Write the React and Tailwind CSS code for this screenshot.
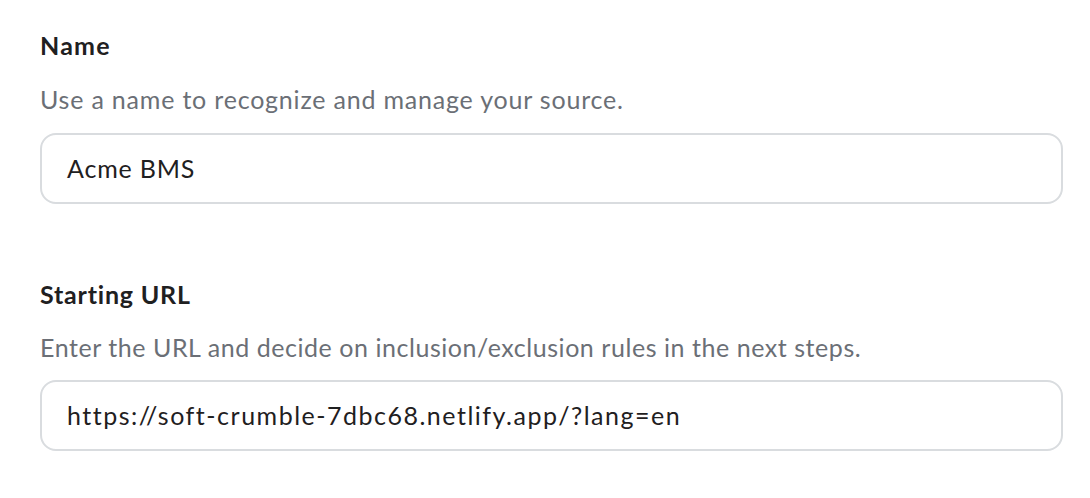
export default function App() {
  return (
    <div className="w-[1090px] h-[498px] bg-white pl-[40px] pr-[27px] pt-[27px] tracking-[0.8px]" style={{ fontFamily: "Lato, 'Noto Sans', sans-serif" }}>
      <div className="flex flex-col">
        <div className="text-[25px] font-bold text-[#1f2021] leading-[36px] tracking-[1.2px]">Name</div>
        <div className="text-[25px] text-[#6b6f76] leading-[36px] mt-[18px]">Use a name to recognize and manage your source.</div>
        <div className="mt-[16px] h-[71px] border-2 border-[#d9dcdf] rounded-[16px] flex items-center px-[25px] text-[25px] text-[#1f2021]">Acme BMS</div>
        <div className="text-[25px] font-bold text-[#1f2021] leading-[36px] mt-[72px]">Starting URL</div>
        <div className="text-[25px] text-[#6b6f76] leading-[36px] mt-[17px] tracking-[0.55px]">Enter the URL and decide on inclusion/exclusion rules in the next steps.</div>
        <div className="mt-[15px] h-[71px] border-2 border-[#d9dcdf] rounded-[16px] flex items-center px-[25px] text-[25px] text-[#1f2021] tracking-[1.5px]">https://soft-crumble-7dbc68.netlify.app/?lang=en</div>
      </div>
    </div>
  );
}
